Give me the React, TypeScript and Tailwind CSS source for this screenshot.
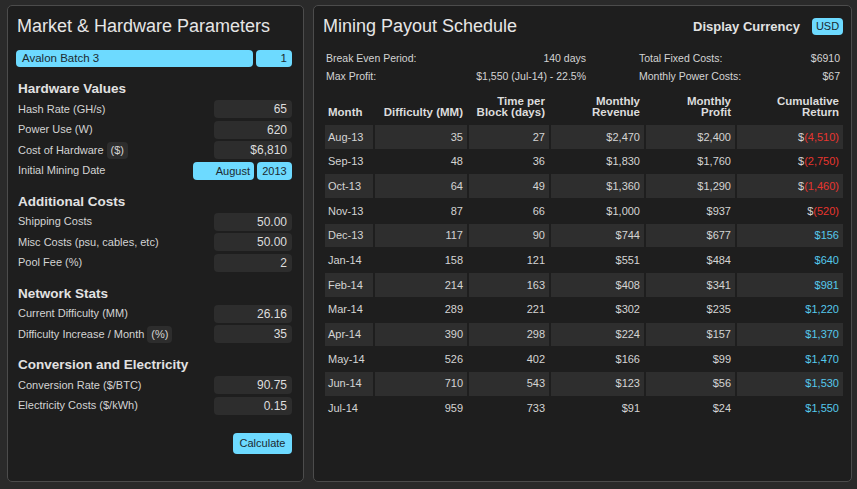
import React from "react"

type Row = [string, string, string, string, string, string, boolean]

const rows: Row[] = [
  ["Aug-13", "35", "27", "$2,470", "$2,400", "4,510", true],
  ["Sep-13", "48", "36", "$1,830", "$1,760", "2,750", true],
  ["Oct-13", "64", "49", "$1,360", "$1,290", "1,460", true],
  ["Nov-13", "87", "66", "$1,000", "$937", "520", true],
  ["Dec-13", "117", "90", "$744", "$677", "$156", false],
  ["Jan-14", "158", "121", "$551", "$484", "$640", false],
  ["Feb-14", "214", "163", "$408", "$341", "$981", false],
  ["Mar-14", "289", "221", "$302", "$235", "$1,220", false],
  ["Apr-14", "390", "298", "$224", "$157", "$1,370", false],
  ["May-14", "526", "402", "$166", "$99", "$1,470", false],
  ["Jun-14", "710", "543", "$123", "$56", "$1,530", false],
  ["Jul-14", "959", "733", "$91", "$24", "$1,550", false],
]

function Field({ label, value, unit }: { label: string; value: string; unit?: string }) {
  return (
    <div className="flex h-[18px] items-center justify-between pl-[2px]">
      <div className="flex items-center">
        <span>{label}</span>
        {unit && (
          <span className="ml-[3px] h-[17px] rounded-[4px] bg-[#2d2d2d] px-[4px] leading-[17px]">{unit}</span>
        )}
      </div>
      <div className="h-[18px] w-[78px] rounded-[4px] bg-[#2d2d2d] pr-[5px] text-right text-[12px] leading-[18px] text-[#dedede]">
        {value}
      </div>
    </div>
  )
}

function Heading({ children }: { children: React.ReactNode }) {
  return (
    <h2 className="mt-[13px] mb-[2px] pl-[2px] text-[13.5px] font-bold leading-[18px] text-[#e2e2e2]">{children}</h2>
  )
}

export default function App() {
  return (
    <div className="flex min-h-screen gap-[9px] bg-[#2a2a2a] pl-[7px] pt-[5px] font-['Liberation_Sans',Arial,sans-serif] text-[11px] text-[#d4d4d4]">
      {/* left: parameters */}
      <div className="flex h-[477px] w-[297px] flex-col rounded-[5px] border border-[#4c4c4c] bg-[#1e1e1e] pl-[8px] pr-[11px]">
        <h1 className="mt-[9px] pl-[1px] text-[18px] leading-[23px] text-[#e6e6e6]">Market &amp; Hardware Parameters</h1>

        <div className="mt-[12px] flex h-[17px] gap-[3px] text-[11.5px] leading-[17px] text-[#1c2a30]">
          <div className="flex-1 rounded-[4px] bg-[#6ddaff] pl-[6px]">Avalon Batch 3</div>
          <div className="w-[36px] rounded-[4px] bg-[#6ddaff] pr-[5px] text-right">1</div>
        </div>

        <Heading>Hardware Values</Heading>
        <div className="flex flex-col gap-[2.5px]">
          <Field label="Hash Rate (GH/s)" value="65" />
          <Field label="Power Use (W)" value="620" />
          <Field label="Cost of Hardware" unit="($)" value="$6,810" />
          <div className="flex h-[18px] items-center justify-between pl-[2px]">
            <span>Initial Mining Date</span>
            <div className="flex h-[18px] gap-[3px] leading-[18px] text-[#1c2a30]">
              <div className="w-[61px] rounded-[4px] bg-[#6ddaff] pr-[4px] text-right">August</div>
              <div className="w-[35px] rounded-[4px] bg-[#6ddaff] text-center">2013</div>
            </div>
          </div>
        </div>

        <Heading>Additional Costs</Heading>
        <div className="flex flex-col gap-[2.5px]">
          <Field label="Shipping Costs" value="50.00" />
          <Field label="Misc Costs (psu, cables, etc)" value="50.00" />
          <Field label="Pool Fee (%)" value="2" />
        </div>

        <Heading>Network Stats</Heading>
        <div className="flex flex-col gap-[2.5px]">
          <Field label="Current Difficulty (MM)" value="26.16" />
          <Field label="Difficulty Increase / Month" unit="(%)" value="35" />
        </div>

        <Heading>Conversion and Electricity</Heading>
        <div className="flex flex-col gap-[2.5px]">
          <Field label="Conversion Rate ($/BTC)" value="90.75" />
          <Field label="Electricity Costs ($/kWh)" value="0.15" />
        </div>

        <div className="mt-[18px] flex justify-end">
          <button className="h-[21px] w-[59px] rounded-[4px] bg-[#6ddaff] text-[11px] text-[#1c2a30]">Calculate</button>
        </div>
      </div>

      {/* right: payout schedule */}
      <div className="flex h-[477px] w-[539px] flex-col rounded-[5px] border border-[#4c4c4c] bg-[#1e1e1e] pl-[9px] pr-[8px]">
        <div className="mt-[9px] flex items-start justify-between">
          <h1 className="text-[18px] leading-[23px] text-[#e6e6e6]">Mining Payout Schedule</h1>
          <div className="mt-[2px] flex items-center gap-[12px]">
            <span className="text-[13px] font-bold text-[#e2e2e2]">Display Currency</span>
            <span className="h-[17px] w-[31px] rounded-[4px] bg-[#6ddaff] text-center text-[11px] leading-[17px] text-[#1c2a30]">
              USD
            </span>
          </div>
        </div>

        <div className="mt-[11px] flex pl-[3px] text-[10.5px] leading-[18px]">
          <div className="w-[260px]">
            <div className="flex justify-between">
              <span>Break Even Period:</span>
              <span>140 days</span>
            </div>
            <div className="flex justify-between">
              <span>Max Profit:</span>
              <span>$1,550 (Jul-14) - 22.5%</span>
            </div>
          </div>
          <div className="ml-[53px] w-[201px]">
            <div className="flex justify-between">
              <span>Total Fixed Costs:</span>
              <span>$6910</span>
            </div>
            <div className="flex justify-between">
              <span>Monthly Power Costs:</span>
              <span>$67</span>
            </div>
          </div>
        </div>

        <table className="mt-[10px] w-[522px] table-fixed border-separate border-spacing-x-[2px] border-spacing-y-[1px] text-[11px]">
          <colgroup>
            <col className="w-[48px]" />
            <col className="w-[92px]" />
            <col className="w-[80px]" />
            <col className="w-[93px]" />
            <col className="w-[89px]" />
            <col className="w-[106px]" />
          </colgroup>
          <thead>
            <tr className="align-bottom text-[11.5px] font-bold leading-[11px] text-[#dcdcdc]">
              <th className="px-[3px] pb-[6px] text-left">Month</th>
              <th className="px-[4px] pb-[6px] text-right">Difficulty (MM)</th>
              <th className="px-[4px] pb-[6px] text-right">
                Time per
                <br />
                Block (days)
              </th>
              <th className="px-[4px] pb-[6px] text-right">
                Monthly
                <br />
                Revenue
              </th>
              <th className="px-[4px] pb-[6px] text-right">
                Monthly
                <br />
                Profit
              </th>
              <th className="px-[4px] pb-[6px] text-right">
                Cumulative
                <br />
                Return
              </th>
            </tr>
          </thead>
          <tbody>
            {rows.map((r, i) => (
              <tr key={r[0]} className={i % 2 === 0 ? "bg-[#2e2e2e]" : ""}>
                <td className="h-[23.7px] px-[3px] text-left">{r[0]}</td>
                <td className="px-[4px] text-right">{r[1]}</td>
                <td className="px-[4px] text-right">{r[2]}</td>
                <td className="px-[4px] text-right">{r[3]}</td>
                <td className="px-[4px] text-right">{r[4]}</td>
                <td className="px-[4px] text-right">
                  {r[6] ? (
                    <>
                      $<span className="text-[#e8352e]">({r[5]})</span>
                    </>
                  ) : (
                    <span className="text-[#55c8ec]">{r[5]}</span>
                  )}
                </td>
              </tr>
            ))}
          </tbody>
        </table>
      </div>
    </div>
  )
}
